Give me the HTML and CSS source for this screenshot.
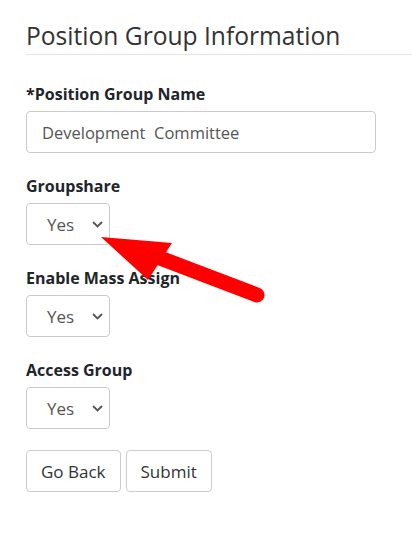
FILE: index.html
```html
<!DOCTYPE html>
<html>
<head>
<meta charset="utf-8">
<link rel="stylesheet" href="styles.css">
</head>
<body>
<div class="page">
  <h1 class="title">Position Group Information</h1>
  <div class="form">
    <div class="group">
      <label class="label">*Position Group Name</label>
      <div class="input">Development&nbsp; Committee</div>
    </div>
    <div class="group">
      <label class="label">Groupshare</label>
      <div class="select"><span>Yes</span><svg class="chev" width="11" height="7" viewBox="0 0 11 7"><path d="M1 1 L5.5 5.5 L10 1" fill="none" stroke="#555" stroke-width="1.8"/></svg></div>
    </div>
    <div class="group">
      <label class="label">Enable Mass Assign</label>
      <div class="select"><span>Yes</span><svg class="chev" width="11" height="7" viewBox="0 0 11 7"><path d="M1 1 L5.5 5.5 L10 1" fill="none" stroke="#555" stroke-width="1.8"/></svg></div>
    </div>
    <div class="group">
      <label class="label">Access Group</label>
      <div class="select"><span>Yes</span><svg class="chev" width="11" height="7" viewBox="0 0 11 7"><path d="M1 1 L5.5 5.5 L10 1" fill="none" stroke="#555" stroke-width="1.8"/></svg></div>
    </div>
    <div class="buttons">
      <button class="btn">Go Back</button>
      <button class="btn">Submit</button>
    </div>
  </div>
  <svg class="arrow" width="412" height="542" viewBox="0 0 412 542">
    <line x1="257" y1="295" x2="160" y2="258" stroke="#ff0000" stroke-width="15" stroke-linecap="round"/>
    <polygon points="101,237 172,243 148,280" fill="#ff0000"/>
  </svg>
</div>
</body>
</html>
```
FILE: styles.css
```css
html, body {
  margin: 0;
  padding: 0;
  background: #fff;
}
.page {
  position: relative;
  width: 412px;
  height: 542px;
  overflow: hidden;
  font-family: "Open Sans", "Noto Sans", sans-serif;
  color: #212529;
}
.title {
  margin: 0 0 0 26px;
  padding: 21px 0 3px 0;
  font-size: 24.6px;
  font-weight: 400;
  line-height: 30px;
  color: #333;
  border-bottom: 1px solid #e5e5e5;
}
.form {
  padding: 27px 0 0 26px;
}
.group {
  margin-bottom: 21px;
}
.label {
  display: block;
  font-size: 16px;
  font-weight: 700;
  line-height: 24px;
  margin-bottom: 5px;
  color: #212529;
}
.input {
  box-sizing: border-box;
  width: 350px;
  height: 42px;
  border: 1px solid #ccc;
  border-radius: 4px;
  padding: 0 15px;
  display: flex;
  align-items: center;
  font-size: 16.5px;
  color: #555;
}
.select {
  box-sizing: border-box;
  width: 84px;
  height: 42px;
  border: 1px solid #ccc;
  border-radius: 4px;
  display: flex;
  align-items: center;
  justify-content: space-between;
  padding: 0 6px 0 20px;
  font-size: 17px;
  color: #555;
}
.buttons {
  display: flex;
  gap: 5px;
  margin-top: 0;
}
.btn {
  box-sizing: border-box;
  height: 42px;
  border: 1px solid #ccc;
  border-radius: 4px;
  background: #fff;
  padding: 0 14px;
  font-family: "Open Sans", "Noto Sans", sans-serif;
  font-size: 17px;
  color: #333;
}
.arrow {
  position: absolute;
  left: 0;
  top: 0;
  pointer-events: none;
}
```
